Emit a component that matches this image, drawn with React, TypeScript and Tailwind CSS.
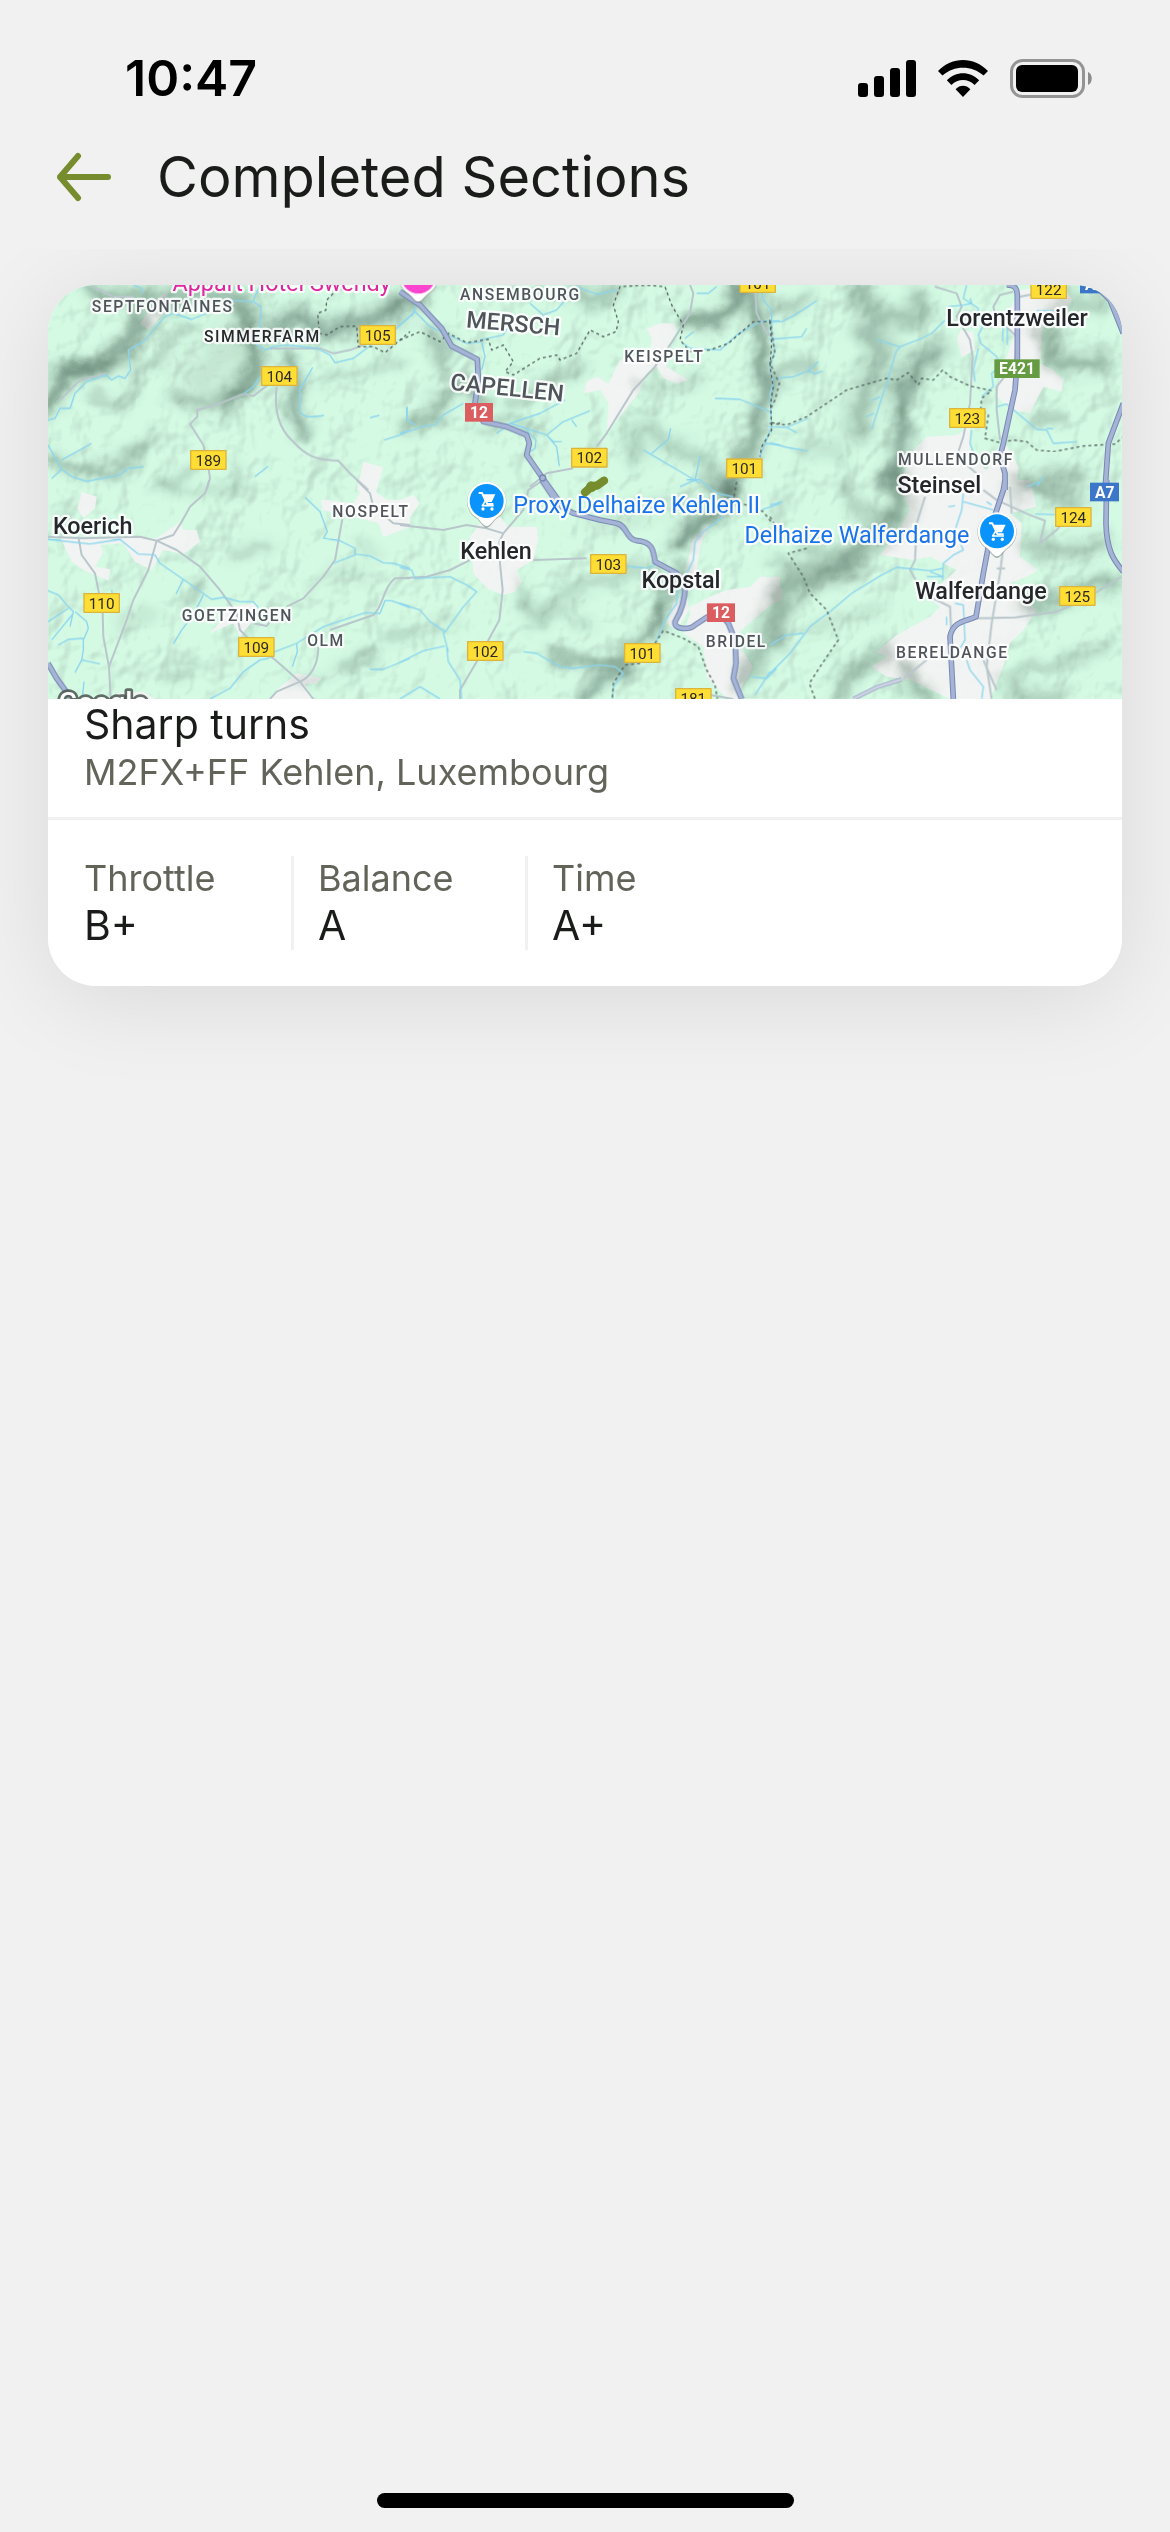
import React from "react";

type Pt = { d: string; w: number; o: number };
type Sector = {
  x: number;
  y: number;
  shade: Pt[];
  towns?: string[];
  roads?: string[];
  rivers?: string[];
  borders?: string[];
  highways?: string[];
};

const sectors: Sector[] = [
  {
    x: 0,
    y: 0,
    shade: [
      { d: "M0 430L40 395L65 320L130 285L200 290L250 235L310 150", w: 34, o: 0.75 },
      { d: "M60 310L130 285L190 295", w: 26, o: 0.5 },
      { d: "M150 50L250 85L370 85L480 70L620 75", w: 40, o: 0.5 },
      { d: "M595 120L625 180L648 270L630 330L580 375", w: 34, o: 0.75 },
      { d: "M160 370L190 400L250 405L280 360L290 290L370 280L390 200L450 170", w: 18, o: 0.4 },
      { d: "M400 380L470 405L600 370", w: 24, o: 0.45 },
      { d: "M570 390L570 445", w: 12, o: 0.4 },
      { d: "M745 260L775 330L755 390L790 490", w: 28, o: 0.65 },
      { d: "M700 175L770 140L840 180L960 155L1080 120", w: 42, o: 0.65 },
      { d: "M480 330L560 250L600 200", w: 90, o: 0.14 },
      { d: "M40 560L95 605L230 600L320 510", w: 26, o: 0.45 },
      { d: "M350 650L400 640L480 580", w: 18, o: 0.35 },
      { d: "M850 340L930 300L1080 280", w: 16, o: 0.3 },
      { d: "M590 590L590 650", w: 24, o: 0.25 },
    ],
    towns: ["M300 160L350 90L380 60L380 120L325 180Z", "M970 575L1030 592L1010 660L950 660Z"],
    roads: [
      "M610 372L640 378L690 340",
      "M610 372L540 400L472 420L472 440L450 462L490 525L505 590L510 625L500 660",
      "M710 350C700 430 720 480 760 515C800 560 830 570 895 572L930 610L985 660",
      "M160 50L220 80L280 80",
      "M60 390L120 330L200 310",
      "M690 235L840 235L880 250L930 240L970 225",
    ],
    rivers: [
      "M24 450L45 445L60 415L90 415L105 370L140 335L200 315L215 330L235 318L255 325L272 300L265 240L310 215L375 140L400 130L455 148L500 130M555 90L640 95L663 110L660 165L640 215L675 240L700 230L740 225L830 235L870 255L885 278L940 265L1000 220L1040 200L1110 140",
      "M280 45L305 55L308 70M658 50L640 90M660 320L640 350L612 370",
      "M818 292L780 360L780 425C790 440 800 445 852 436M990 443L1018 436",
      "M1033 510L1080 495L1110 480M1100 412L1100 450",
      "M24 525L65 598L95 620L140 634L240 615L265 595L312 590M65 570L110 545L155 520M245 610L265 595M65 598L35 626M645 620L685 588",
    ],
    borders: ["M912 56L885 65L860 90L858 120L833 130L838 190L860 195L900 170L950 168L955 230L1000 230L1035 248L1110 185"],
  },
  {
    x: 1080,
    y: 0,
    shade: [
      { d: "M0 100L60 75", w: 40, o: 0.6 },
      { d: "M90 190L130 230L125 290", w: 36, o: 0.45 },
      { d: "M20 470L100 445L120 380L200 350L240 400", w: 28, o: 0.55 },
      { d: "M320 400L440 340L540 290", w: 26, o: 0.3 },
      { d: "M500 55L560 95L640 65", w: 26, o: 0.5 },
      { d: "M710 560L700 500L740 460L800 520L900 560L980 640", w: 38, o: 0.3 },
      { d: "M860 160L940 145L1000 95L1030 50", w: 34, o: 0.8 },
      { d: "M1060 80L1090 220L1095 340L1075 420L1055 540L985 630", w: 32, o: 0.7 },
      { d: "M720 350L820 360L900 320", w: 20, o: 0.25 },
      { d: "M250 480L340 450L400 480", w: 20, o: 0.3 },
    ],
    towns: [
      "M740 175L780 160L825 160L830 185L810 220L800 290L865 330L830 340L790 325L770 290L740 310L715 370L620 490L625 400L600 360L550 370L560 335L590 320L625 340L660 270L750 240L755 205Z",
      "M625 400L670 395L640 450Z",
    ],
    roads: [
      "M870 45L880 70L870 130L820 210L765 290L700 360L620 490L590 530",
      "M520 595L440 610L390 650",
      "M1065 50L1070 130L1095 180L1115 200",
    ],
    rivers: [
      "M0 165L45 125L90 170L200 220L245 215L255 260L245 300M60 80L35 140M530 50L590 73L650 60M240 210L310 195L325 170M390 100L430 135L470 120L500 85",
      "M0 490L40 480L70 468L105 465L130 435L190 400M22 410L20 450L45 465M290 490L330 460L420 430L495 390M330 460L440 495L490 455L570 422M440 495L470 530L478 588M440 495L460 515L485 515M515 450L530 470M380 480L408 510L405 535L375 555",
      "M890 70L925 70L950 50M1080 50L1090 90L1115 120L1115 200L1125 240L1110 290L1120 340L1110 370L1115 470L1080 560M850 220L870 235L960 240L1010 195L1080 155L1140 152M945 385L1020 388L1110 425M855 205L882 185",
      "M730 540L850 610L900 640M755 550L805 508L812 475M840 650L885 630L900 560M1095 520L1140 525",
    ],
    borders: [
      "M0 210L60 185L90 200L120 215L145 190L200 218L265 208L275 240L310 225L340 275L315 305L340 315L420 265L470 255L480 270L530 250L570 180L610 200L648 185L655 155L640 105L660 50L740 45L795 50L815 105L850 165L840 210L870 245L930 240L985 220L1060 155L1110 155L1115 220L1110 290L1120 350L1112 400L1115 480L1085 530L1080 560",
      "M1115 458L1140 460",
    ],
    highways: ["M0 65L60 105L125 175L155 228L232 268L235 330L225 400L250 455L320 470L380 495L388 520L380 555L425 620L475 690"],
  },
  {
    x: 2190,
    y: 0,
    shade: [
      { d: "M10 110L70 115L110 85", w: 26, o: 0.4 },
      { d: "M250 50L300 100L330 150L400 150L450 130L440 70", w: 40, o: 0.45 },
      { d: "M290 185L340 240L310 310L270 400L265 480", w: 50, o: 0.45 },
      { d: "M510 240L430 290L385 370L400 450L395 530L370 640", w: 38, o: 0.65 },
      { d: "M400 420L420 380L440 330", w: 30, o: 0.3 },
      { d: "M820 190L850 250L890 290L1000 275", w: 36, o: 0.6 },
      { d: "M850 120L920 90L990 100", w: 34, o: 0.35 },
      { d: "M790 445L860 445", w: 26, o: 0.4 },
      { d: "M0 340L60 295L120 285", w: 24, o: 0.4 },
      { d: "M770 640L870 610L940 620", w: 30, o: 0.4 },
      { d: "M100 560L180 520L220 580", w: 30, o: 0.18 },
    ],
    towns: [
      "M750 60L850 45L910 85L880 130L820 160L810 280L850 300L880 330L875 365L820 350L780 430L725 420L680 380L690 320L730 200L700 150Z",
      "M570 180L610 185L615 240L575 262L560 210Z",
      "M430 540L470 500L560 495L600 470L600 560L650 600L700 510L745 590L740 660L380 660Z",
    ],
    roads: [
      "M495 50L560 70L575 110L560 140L600 210L608 260L600 400L580 500L560 560L620 610",
      "M730 65L690 75L670 110L678 140L740 200L735 280L680 350L680 420L690 510",
      "M750 80L800 70",
    ],
    rivers: [
      "M140 92L75 135L35 155L0 155M110 175L95 200L0 208M145 275L115 302L70 320L20 325M115 302L135 312L158 303M0 470L50 472L115 445M50 472L80 488M0 518L50 532L112 543",
      "M525 150L485 190L455 205L390 230L320 210M390 230L378 245L350 340L330 400L305 478M330 380L305 392M312 430L288 440",
      "M600 85L605 100L582 105L535 110M590 45L580 85L625 115L620 140L640 165L625 195L632 220L680 260L690 290L665 310L670 350L635 380M700 140L698 215M712 145L712 225M625 235L610 300L615 335",
      "M680 410L710 402L800 478L830 480L850 520L920 515M830 475L850 476M800 650L820 620M605 480L600 520L615 560M800 122L850 122",
    ],
    borders: [
      "M0 460L50 465L110 440L230 360L350 325L380 330L415 308L445 345L455 325L490 330L518 300L540 320L600 348L665 362L635 385L632 420L655 435L645 505L690 518L730 510L770 515L800 540L850 545L940 528L1035 522L1060 500",
      "M0 150L15 250L0 280L28 340L15 390L0 420",
    ],
    highways: [
      "M710 45C735 45 742 55 742 80L742 270L735 360L700 520L690 560L705 610L705 660",
      "M960 30L1020 90L1060 190M1060 400L1015 520L1005 660",
    ],
  },
  {
    x: 0,
    y: 630,
    shade: [
      { d: "M450 360L480 325", w: 22, o: 0.4 },
      { d: "M590 225L640 195L690 195", w: 28, o: 0.28 },
      { d: "M395 585L460 560", w: 22, o: 0.35 },
      { d: "M900 565L950 550L1010 520", w: 20, o: 0.45 },
      { d: "M960 190L1015 230", w: 16, o: 0.2 },
      { d: "M350 10L420 40L520 30L600 20", w: 22, o: 0.2 },
      { d: "M820 320L900 270L980 280", w: 24, o: 0.15 },
      { d: "M1050 460L1110 465", w: 24, o: 0.3 },
      { d: "M760 600L850 590", w: 18, o: 0.25 },
      { d: "M240 440L330 400", w: 24, o: 0.14 },
    ],
    towns: [
      "M125 35L170 50L165 85L130 115L112 85Z",
      "M60 170L280 170L350 175L420 125L430 150L470 150L480 185L430 222L370 210L335 270L285 245L250 190L180 195L190 215L165 260L212 268L205 302L130 270L95 245Z",
      "M560 380L650 370L640 420L600 470L580 430L510 460L540 425Z",
      "M950 0L1005 0L1010 40L1045 60L1110 60L1110 140L1030 172L1015 130L940 110L845 90L845 58L940 70L960 40Z",
      "M770 580L845 595L830 610L795 612L820 657L690 657L710 630Z",
      "M230 640L310 635L345 657L230 657Z",
    ],
    roads: [
      "M24 170L130 175L300 170L350 182L400 165L425 125L450 80L495 40L508 0",
      "M350 182L410 210L480 260L540 330L590 400L600 450L650 500L700 535L780 605L820 657",
      "M350 182L325 270L280 360L260 420L207 560L190 470L188 400L175 330L165 280L125 225L115 170M207 560L212 657",
      "M950 0L990 40L1000 80L1060 130L1110 135M910 100L885 240L850 290L790 355L740 380",
      "M1110 295L1065 295C1030 320 1030 380 1000 405L870 450M835 500C835 550 815 590 780 605L710 635L690 657",
      "M640 430L680 438L690 425",
    ],
    rivers: [
      "M24 178L150 192L240 178L295 222L345 225L360 250L430 298L515 358L550 352L600 365L640 365L655 382M430 298L408 342M490 345L460 405L425 450L400 492",
      "M24 332L55 345L85 380L100 395L90 440M24 425L85 385M35 480L100 400M105 395L140 425L145 445L130 480L130 510L125 540L105 578M125 540L180 552M55 495L85 478L130 475",
      "M510 657L570 625L610 575L660 540L685 535L705 515L770 490L850 440L975 398L1020 400L1035 362L1055 362L1110 382M770 490L772 515L757 560M990 568L1030 568L1110 535M795 52L840 95L862 155L850 175L900 182L945 205L945 225L880 250M945 222L990 228L1030 248L1060 250L1110 265",
      "M215 330L220 360M132 605L128 645",
    ],
    highways: ["M24 550L50 595L90 650"],
  },
  {
    x: 1080,
    y: 630,
    shade: [
      { d: "M370 360L420 405L520 330L640 290L760 260", w: 26, o: 0.3 },
      { d: "M400 440L480 400L560 430", w: 24, o: 0.2 },
      { d: "M470 530L570 555L660 540L740 470L790 380", w: 26, o: 0.6 },
      { d: "M780 440L810 340L850 270", w: 28, o: 0.5 },
      { d: "M830 190L870 145L930 110L985 60L1000 20", w: 34, o: 0.9 },
      { d: "M560 650L620 590L680 560", w: 30, o: 0.65 },
      { d: "M1020 610L1050 550L1130 480", w: 34, o: 0.5 },
      { d: "M930 20L990 30", w: 26, o: 0.6 },
      { d: "M360 310L380 370", w: 20, o: 0.3 },
      { d: "M600 130L760 80L860 60", w: 34, o: 0.15 },
      { d: "M50 460L160 430", w: 22, o: 0.15 },
    ],
    towns: [
      "M240 130L300 110L325 140L410 140L415 175L400 240L350 270L365 305L345 335L310 345L260 325L220 280L215 220L210 170Z",
      "M0 60L40 45L60 70L30 110L0 140Z",
      "M880 170L930 130L900 200L890 270L870 330L820 370L800 430L830 450L850 420L870 380L930 350L980 330L1050 320L1080 290L1140 290L1140 350L1060 420L1000 470L1060 560L1020 630L1030 657L980 657L920 590L910 500L850 460L870 400L850 300Z",
    ],
    roads: [
      "M0 135L130 150L200 135L260 145L310 160L370 90L385 30L430 0",
      "M310 160L298 185L300 250L308 330L298 420L230 545L180 630L180 657",
      "M0 295L80 290L150 270L210 240M400 240L560 235",
      "M930 645L1000 657",
    ],
    rivers: [
      "M0 262L35 270L45 295L150 290L200 315L230 335L190 380L140 450L130 460L145 515M0 370L60 390L90 425L135 455M0 547L70 512L135 498M140 500L145 545L180 600L185 657M0 657L60 620L120 657",
      "M370 515L410 520L480 560L520 565L600 555L645 560L670 580M670 580L640 620L637 657M600 250L740 265L765 255",
      "M970 110L910 155L885 185L880 240L860 280L835 310L830 370L795 420L765 490M1050 590L1100 595L1130 565M1110 575L1065 645M860 0L900 0L950 40L1000 50M1085 90L1140 70",
    ],
    borders: ["M1010 5L1000 60L1090 95L1140 160", "M765 490L790 452L850 475L895 500L920 570L945 615L952 657", "M720 550L675 555L640 610L637 657"],
    highways: ["M425 0L475 75L520 100L600 120L650 130C680 135 680 180 710 182C760 185 760 215 765 245L830 280L855 320C855 370 840 400 825 425C820 450 870 450 885 435L920 412L960 400L985 430L1005 480L1008 550L1000 595L1025 657"],
  },
  {
    x: 2190,
    y: 630,
    shade: [
      { d: "M370 0L405 70L350 140L270 200L240 260L130 295L70 300L30 380L0 440", w: 46, o: 0.6 },
      { d: "M230 30L260 90L380 110", w: 30, o: 0.35 },
      { d: "M120 210L200 225L240 250", w: 40, o: 0.3 },
      { d: "M350 510L280 545L230 590L215 650", w: 32, o: 0.45 },
      { d: "M400 570L430 620L470 655", w: 36, o: 0.5 },
      { d: "M750 20L850 30L920 70", w: 40, o: 0.4 },
      { d: "M790 200L880 215L1000 195", w: 36, o: 0.4 },
      { d: "M770 375L870 365L960 310L1030 310", w: 34, o: 0.5 },
      { d: "M760 580L880 540L1010 500", w: 22, o: 0.35 },
      { d: "M0 240L80 260L190 270", w: 20, o: 0.3 },
      { d: "M120 450L230 410L330 380", w: 20, o: 0.2 },
      { d: "M720 600L760 650L880 640", w: 26, o: 0.4 },
    ],
    towns: [
      "M390 20L640 0L780 0L800 80L720 100L755 130L750 230L805 270L770 290L720 310L800 390L760 450L720 490L700 560L660 657L540 657L420 600L350 590L305 560L350 530L320 515L380 465L480 410L510 380L470 350L560 270L480 230L430 240L330 225L380 160L420 90Z",
      "M0 290L40 330L35 360L0 375Z",
    ],
    roads: [
      "M465 50L440 130L435 240L420 270L460 340L540 380L545 480",
      "M640 30L680 60L780 105L825 122L810 190L860 150L900 100M700 200L690 280L665 430L650 560L665 657M600 415L735 412L860 395L940 360L1055 290",
      "M640 540L680 630M680 265L705 265M720 20L725 100",
      "M470 540L400 595",
    ],
    rivers: [
      "M580 40L575 90L555 150L580 210L550 225L520 250L518 300M580 65L670 90M650 65L665 75M535 80L555 77M795 102L880 105M0 75L38 65M770 20L810 5",
      "M0 580L60 520L120 440L180 395L245 340L335 285L380 262L480 272L520 265M470 290L520 290L480 275M0 495L50 465L100 460M555 370L580 375L585 480L570 505M530 410L530 435M590 540L600 570L640 620L635 657",
    ],
    borders: ["M0 110L30 160M110 205L55 220L100 290L120 340L170 390L205 480L150 560L118 610L135 657"],
    highways: [
      "M705 0L700 30L670 120L640 280L618 410C590 425 550 420 540 470L550 657",
      "M1010 0L1008 130C1010 210 1030 240 1060 275",
    ],
  },
];

const shields: { x: number; y: number; n: string }[] = [
  { x: 1013, y: 195, n: "105" },
  { x: 718, y: 318, n: "104" },
  { x: 505, y: 570, n: "189" },
  { x: 1648, y: 563, n: "102" },
  { x: 2113, y: 595, n: "101" },
  { x: 2153, y: 39, n: "101" },
  { x: 3026, y: 57, n: "122" },
  { x: 2782, y: 444, n: "123" },
  { x: 3100, y: 741, n: "124" },
  { x: 3112, y: 978, n: "125" },
  { x: 185, y: 999, n: "110" },
  { x: 649, y: 1131, n: "109" },
  { x: 1336, y: 1143, n: "102" },
  { x: 1705, y: 882, n: "103" },
  { x: 1807, y: 1149, n: "101" },
  { x: 1960, y: 1284, n: "181" },
];

const routeShields = [
  { x: 1317, y: 427, w: 84, n: "12", c: "#dc5d60" },
  { x: 2043, y: 1028, w: 84, n: "12", c: "#dc5d60" },
  { x: 2931, y: 296, w: 136, n: "E421", c: "#659c41" },
  { x: 3194, y: 666, w: 88, n: "A7", c: "#3b76c8" },
  { x: 3164, y: 42, w: 88, n: "A7", c: "#3b76c8" },
];

const hamlets = [
  { x: 368, y: 126, t: "SEPTFONTAINES" },
  { x: 667, y: 217, t: "SIMMERFARM", dark: true },
  { x: 1441, y: 91, t: "ANSEMBOURG" },
  { x: 1873, y: 277, t: "KEISPELT" },
  { x: 2748, y: 584, t: "MULLENDORF" },
  { x: 993, y: 740, t: "NOSPELT" },
  { x: 592, y: 1052, t: "GOETZINGEN" },
  { x: 858, y: 1128, t: "OLM" },
  { x: 2089, y: 1131, t: "BRIDEL" },
  { x: 2737, y: 1163, t: "BERELDANGE" },
];

const townLabels = [
  { x: 2931, y: 167, t: "Lorentzweiler" },
  { x: 2698, y: 670, t: "Steinsel" },
  { x: 158, y: 791, t: "Koerich" },
  { x: 1368, y: 866, t: "Kehlen" },
  { x: 1923, y: 954, t: "Kopstal" },
  { x: 2823, y: 986, t: "Walferdange" },
];

function Lines({ kind, color, width, dash }: { kind: "roads" | "rivers" | "borders" | "highways"; color: string; width: number; dash?: string }) {
  return (
    <g fill="none" stroke={color} strokeWidth={width} strokeDasharray={dash} strokeLinejoin="round">
      {sectors.map((s, i) => (
        <g key={i} transform={`translate(${s.x} ${s.y})`}>
          {(s[kind] ?? []).map((d) => (
            <path key={d} d={d} />
          ))}
        </g>
      ))}
    </g>
  );
}

function Shading({ spread, strength }: { spread: number; strength: number }) {
  return (
    <g fill="none" stroke="#4a6659" strokeLinecap="round" strokeLinejoin="round">
      {sectors.map((s, i) => (
        <g key={i} transform={`translate(${s.x} ${s.y})`}>
          {s.shade.map((p) => (
            <path key={p.d} d={p.d} strokeWidth={p.w * spread} opacity={p.o * strength} />
          ))}
        </g>
      ))}
    </g>
  );
}

function PinShape({ color }: { color: string }) {
  return (
    <>
      <path d="M0 77C-12 77 -20 54 -36 46A59 59 0 1 1 36 46C20 54 12 77 0 77Z" fill="#6b7f76" opacity="0.55" transform="translate(0 3)" />
      <path d="M0 75C-12 75 -20 54 -36 46A58 58 0 1 1 36 46C20 54 12 75 0 75Z" fill="#fff" />
      <circle r="51" fill={color} />
    </>
  );
}

function ShopPin({ x, y }: { x: number; y: number }) {
  return (
    <g transform={`translate(${x} ${y})`}>
      <PinShape color="#0a94fb" />
      <path d="M-24 -24H-14L2 9H20" fill="none" stroke="#fff" strokeWidth="6" strokeLinejoin="round" />
      <path d="M-14 -20H26L15 3H-3Z" fill="#fff" />
      <path d="M-3 -2L-13 14H21" fill="none" stroke="#fff" strokeWidth="5" strokeLinejoin="round" />
      <circle cx="-11" cy="24" r="5" fill="#fff" />
      <circle cx="16" cy="24" r="5" fill="#fff" />
    </g>
  );
}

function TerrainMap() {
  return (
    <svg viewBox="24 45 3222 1242" className="block h-auto w-full bg-[#d2f8e2]" role="img" aria-label="Map of Kehlen, Luxembourg">
      <defs>
        <filter id="soft" x="-10%" y="-10%" width="120%" height="120%">
          <feTurbulence type="fractalNoise" baseFrequency="0.012" numOctaves="3" seed="3" result="noise" />
          <feGaussianBlur in="SourceGraphic" stdDeviation="12" result="blurred" />
          <feDisplacementMap in="blurred" in2="noise" scale="60" xChannelSelector="R" yChannelSelector="G" />
        </filter>
        <filter id="relief" x="0" y="0" width="100%" height="100%" colorInterpolationFilters="sRGB">
          <feTurbulence type="fractalNoise" baseFrequency="0.006 0.005" numOctaves="4" seed="8" />
          <feDiffuseLighting surfaceScale="60" diffuseConstant="1.25" lightingColor="#ffffff">
            <feDistantLight azimuth="225" elevation="58" />
          </feDiffuseLighting>
        </filter>
      </defs>
      <rect x="24" y="45" width="3222" height="1242" fill="#d4fae4" />
      <rect x="24" y="45" width="3222" height="1242" filter="url(#relief)" opacity="0.13" className="mix-blend-multiply" />
      <g fill="#f3f3f4" opacity="0.92">
        {sectors.map((s, i) => (
          <g key={i} transform={`translate(${s.x} ${s.y})`}>
            {(s.towns ?? []).map((d) => (
              <path key={d} d={d} />
            ))}
          </g>
        ))}
      </g>
      <g filter="url(#soft)">
        <Shading spread={2.3} strength={0.27} />
        <Shading spread={0.9} strength={0.6} />
      </g>
      <Lines kind="roads" color="#b9c6cb" width={6} />
      <path d="M2440 1287L2510 1252L2585 1228" fill="none" stroke="#9aa4c4" strokeWidth="13" />
      <path d="M2440 1287L2510 1252L2585 1228" fill="none" stroke="#ccd3e2" strokeWidth="8" />
      <Lines kind="rivers" color="#8bd5ee" width={4} />
      <Lines kind="borders" color="#55645f" width={4} dash="9 9" />
      <Lines kind="highways" color="#7787b2" width={17} />
      <Lines kind="highways" color="#a5b4d6" width={11} />
      <circle cx="1508" cy="624" r="9" fill="#a5b4d6" stroke="#7787b2" strokeWidth="4" />

      <g fontFamily="Roboto, sans-serif" textAnchor="middle" strokeLinejoin="round">
        <g className="tracking-widest [paint-order:stroke]" fontSize="47" fontWeight="500" stroke="#ffffff" strokeWidth="13" strokeOpacity="0.85">
          {hamlets.map((h) => (
            <text key={h.t} x={h.x} y={h.y} fill={h.dark ? "#27292c" : "#50555b"}>
              {h.t}
            </text>
          ))}
        </g>
        <g className="[paint-order:stroke]" fontSize="70" fontWeight="500" stroke="#ffffff" strokeWidth="14" strokeOpacity="0.85">
          <text transform="translate(1418 184) rotate(5)" fill="#50555b">MERSCH</text>
          <text transform="translate(1399 377) rotate(6)" fill="#50555b">CAPELLEN</text>
          {townLabels.map((t) => (
            <text key={t.t} x={t.x} y={t.y} fill="#25272b">
              {t.t}
            </text>
          ))}
          <g fontWeight="400" fill="#1a73e8">
            <text x="1790" y="728">Proxy Delhaize Kehlen II</text>
            <text x="2451" y="818">Delhaize Walferdange</text>
            <text x="725" y="62" fill="#e0269f">Appart Hotel Swendy</text>
          </g>
          <text x="189" y="1327" fontSize="84" fill="#ffffff" stroke="#4b5550" strokeWidth="16">Google</text>
        </g>
        <g fontSize="46" fill="#2a2a22">
          {shields.map((s) => (
            <g key={`${s.x}-${s.n}`}>
              <rect x={s.x - 53} y={s.y - 28} width="106" height="56" fill="#fedd35" stroke="#dcb43c" strokeWidth="4" />
              <text x={s.x} y={s.y + 17}>{s.n}</text>
            </g>
          ))}
        </g>
        <g fontSize="47" fontWeight="700" fill="#ffffff">
          {routeShields.map((s) => (
            <g key={`${s.x}-${s.n}`}>
              <rect x={s.x - s.w / 2} y={s.y - 28} width={s.w} height="56" fill={s.c} />
              <text x={s.x} y={s.y + 17}>{s.n}</text>
            </g>
          ))}
        </g>
      </g>

      <g transform="translate(1135 20)">
        <PinShape color="#fb45cf" />
      </g>
      <ShopPin x={1340} y={693} />
      <ShopPin x={2871} y={784} />
      <path d="M1635 667L1654 650L1672 646L1692 632" fill="none" stroke="#778d2d" strokeWidth="25" strokeLinecap="round" strokeLinejoin="round" />
      <circle cx="1654" cy="650" r="16" fill="#778d2d" />
    </svg>
  );
}

function StatusBar() {
  return (
    <div className="flex h-[120px] items-center justify-between pt-9 pr-[78px] pl-[125px]">
      <span className="text-[50px] leading-none font-semibold text-black">10:47</span>
      <div className="flex items-center gap-[22px]">
        <svg className="h-[37px] w-[58px]" viewBox="0 0 58 37" aria-label="Signal">
          <rect y="23" width="10" height="14" rx="3" />
          <rect x="16" y="16" width="10" height="21" rx="3" />
          <rect x="32" y="8" width="10" height="29" rx="3" />
          <rect x="48" width="10" height="37" rx="3" />
        </svg>
        <svg className="h-[37px] w-[50px]" viewBox="0 0 50 37" aria-label="Wi-Fi">
          <path d="M0 11C14 -3.600 36 -3.600 50 11L45.500 15.600C34 5 16 5 4.500 15.600Z" />
          <path d="M8.800 20.200C18 10.800 32 10.800 41.200 20.200L36.600 24.900C30 18.500 20 18.500 13.400 24.900Z" />
          <path d="M17.600 29.200C22 24.600 28 24.600 32.400 29.200L25 37Z" />
        </svg>
        <svg className="h-[39px] w-[82px]" viewBox="0 0 82 39" aria-label="Battery">
          <rect x="1.500" y="1.500" width="72" height="36" rx="11" fill="none" stroke="#949494" strokeWidth="3" />
          <rect x="6" y="6" width="62" height="27" rx="6" />
          <path d="M78 13C83 15 83 24 78 26Z" fill="#8c8c8c" />
        </svg>
      </div>
    </div>
  );
}

const stats = [
  { label: "Throttle", grade: "B+" },
  { label: "Balance", grade: "A" },
  { label: "Time", grade: "A+" },
];

export default function App() {
  return (
    <div className="flex min-h-screen flex-col bg-[#f1f1f1] font-[Inter,sans-serif] text-[#1a1c1a]">
      <StatusBar />
      <header className="flex h-[129px] items-center gap-[45px] px-[54px] pb-[15px]">
        <button type="button" aria-label="Back" className="shrink-0">
          <svg className="h-[54px] w-[58px]" viewBox="0 0 58 54" fill="none" stroke="#778d2d" strokeWidth="6" strokeLinecap="round" strokeLinejoin="round">
            <path d="M54 27H6M24 6L6 27L24 48" />
          </svg>
        </button>
        <h1 className="text-[56px] leading-none">Completed Sections</h1>
      </header>
      <main className="flex-1 overflow-hidden px-12 pt-9">
        <article className="rounded-[48px] shadow-[0_12px_96px_rgba(0,0,0,0.1)]">
          <div className="overflow-hidden rounded-[48px] bg-white">
            <TerrainMap />
            <div className="border-b-[3px] border-[#f1f1f1] px-9 pb-[22px]">
              <h2 className="text-[41px] leading-[50px]">Sharp turns</h2>
              <p className="text-[36px] leading-[46px] text-[#62645a]">M2FX+FF Kehlen, Luxembourg</p>
            </div>
            <dl className="flex px-3 py-9">
              {stats.map((s) => (
                <div key={s.label} className="w-[234px] border-r-[3px] border-[#f1f1f1] pl-6 last:border-r-0">
                  <dt className="text-[36px] leading-[44px] text-[#62645a]">{s.label}</dt>
                  <dd className="text-[41px] leading-[50px]">{s.grade}</dd>
                </div>
              ))}
            </dl>
          </div>
        </article>
      </main>
      <footer className="flex justify-center pb-6">
        <div className="h-[15px] w-[417px] rounded-full bg-black" />
      </footer>
    </div>
  );
}
